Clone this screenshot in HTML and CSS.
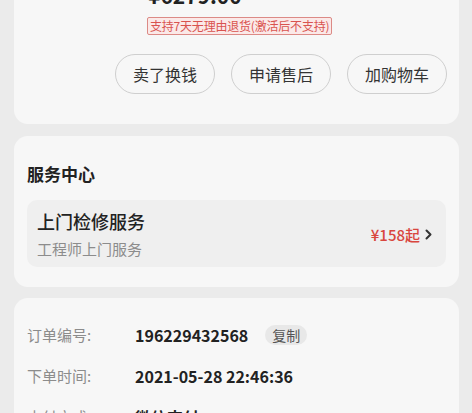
FILE: index.html
```html
<!DOCTYPE html>
<html lang="zh">
<head>
<meta charset="utf-8">
<link rel="stylesheet" href="styles.css">
</head>
<body>
<div class="page">
  <section class="card card-product">
    <div class="price">¥6279.00</div>
    <div class="tag-row"><span class="tag">支持7天无理由退货(激活后不支持)</span></div>
    <div class="actions">
      <button class="pill">卖了换钱</button>
      <button class="pill">申请售后</button>
      <button class="pill">加购物车</button>
    </div>
  </section>

  <section class="card card-service">
    <h2 class="title">服务中心</h2>
    <div class="service">
      <div class="service-text">
        <div class="service-name">上门检修服务</div>
        <div class="service-sub">工程师上门服务</div>
      </div>
      <div class="service-price">¥158起<svg class="chev" width="8" height="11" viewBox="0 0 8 11"><path d="M1.5 1.5 L5.5 5.5 L1.5 9.5" fill="none" stroke="#333" stroke-width="2" stroke-linecap="round" stroke-linejoin="round"/></svg></div>
    </div>
  </section>

  <section class="card card-order">
    <div class="row"><span class="label">订单编号:</span><span class="value">196229432568</span><span class="copy">复制</span></div>
    <div class="row"><span class="label">下单时间:</span><span class="value">2021-05-28 22:46:36</span></div>
    <div class="row"><span class="label">支付方式:</span><span class="value">微信支付</span></div>
  </section>
</div>
</body>
</html>
```
FILE: styles.css
```css
* { box-sizing: border-box; }
html, body { margin: 0; padding: 0; }
body {
  background: #ebebeb;
  font-family: "Noto Sans CJK SC", "Noto Sans", sans-serif;
  color: #222;
  overflow: hidden;
  height: 413px;
}
.page { padding: 0 13px 0 14px; }
.card {
  background: #f7f7f7;
  border-radius: 14px;
}
.card-product {
  margin-top: -19px;
  padding: 0 12px 30px 12px;
}
.price {
  margin-left: 122px;
  font-size: 21px;
  font-weight: 700;
  line-height: 28px;
  height: 28px;
  color: #222;
}
.tag-row { margin-top: 8px; margin-left: 121px; height: 18px; display: flex; }
.tag {
  display: inline-block;
  font-size: 12px;
  line-height: 16px;
  height: 18px;
  padding: 0 2px;
  color: #d9534f;
  background: #fbe9e8;
  border: 1px solid #dc8a86;
  border-radius: 2px;
  letter-spacing: -0.2px;
}
.actions {
  margin-top: 19px;
  display: flex;
  justify-content: flex-end;
  gap: 16px;
}
.pill {
  flex: none;
  width: 100px;
  height: 40px;
  border: 1px solid #cfcfcf;
  border-radius: 20px;
  background: #f7f7f7;
  font-family: inherit;
  font-size: 16px;
  color: #333;
  padding: 0;
}
.card-service {
  margin-top: 12px;
  padding: 26px 13px 20px 13px;
}
.title {
  margin: 0;
  font-size: 17px;
  line-height: 24px;
  font-weight: 700;
  color: #222;
}
.service {
  margin-top: 14px;
  background: #efefef;
  border-radius: 10px;
  padding: 9px 13px 8px 10px;
  display: flex;
  align-items: center;
  justify-content: space-between;
}
.service-name { font-size: 18px; line-height: 24px; color: #222; font-weight: 500; }
.service-sub { margin-top: 6px; font-size: 15px; line-height: 20px; color: #8c8c8c; }
.service-price {
  display: flex;
  align-items: center;
  gap: 5px;
  font-size: 15px;
  font-weight: 500;
  color: #d9463e;
}
.chev { display: block; }
.card-order {
  margin-top: 11px;
  padding: 16px 13px 0 13px;
  height: 200px;
}
.row {
  display: flex;
  align-items: center;
  height: 41px;
}
.label {
  width: 108px;
  font-size: 15px;
  color: #8c8c8c;
}
.value {
  font-size: 16px;
  font-weight: 700;
  color: #222;
}
.copy {
  margin-left: 17px;
  background: #e8e8e8;
  border-radius: 10px;
  font-size: 14px;
  line-height: 20px;
  padding: 0 7px;
  color: #555;
}
```
